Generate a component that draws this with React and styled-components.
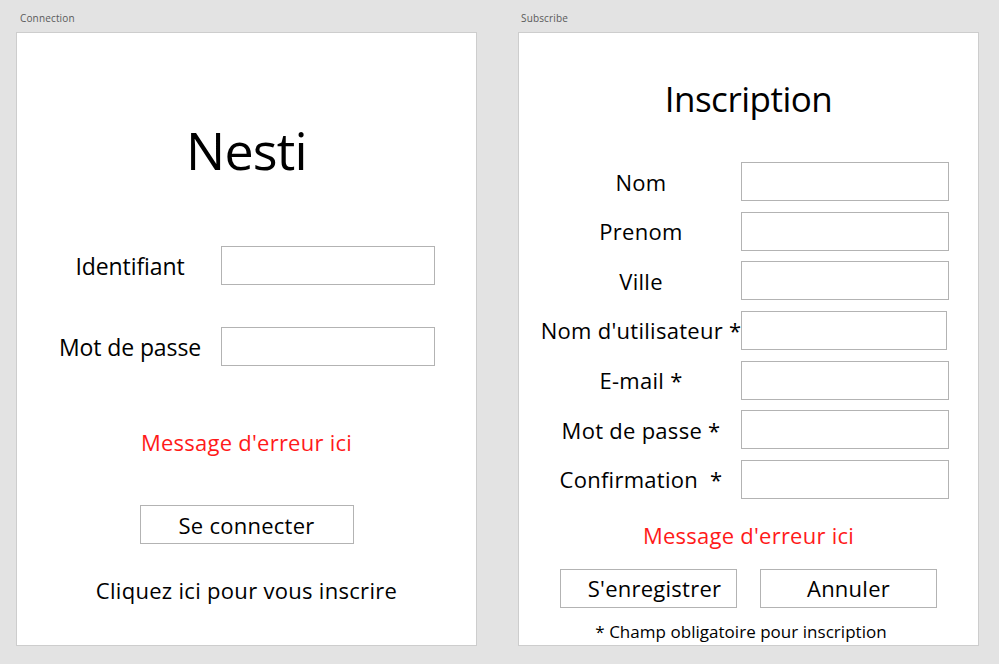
import React from "react";
import styled, { createGlobalStyle } from "styled-components";

const Global = createGlobalStyle`
  html, body { margin: 0; padding: 0; background: #e3e3e3; }
  body { font-family: "Open Sans", "Noto Sans", sans-serif; color: #000; }
  * { box-sizing: border-box; }
`;

const Page = styled.div`
  width: 999px;
  height: 664px;
  display: flex;
  gap: 41px;
  padding-left: 16px;
  background: #e3e3e3;
`;

const Column = styled.div`
  display: flex;
  flex-direction: column;
  width: 461px;
`;

const Caption = styled.div`
  font-size: 10px;
  line-height: 14px;
  letter-spacing: 0.15px;
  color: #5a5a5a;
  padding: 11px 0 7px ${(p) => p.$indent || 4}px;
`;

const Panel = styled.div`
  height: 614px;
  background: #fff;
  border: 1px solid #cdcdcd;
  display: flex;
  flex-direction: column;
  align-items: ${(p) => (p.$stretch ? "stretch" : "center")};
`;

const Title = styled.div`
  font-size: ${(p) => p.$size}px;
  line-height: ${(p) => p.$lh}px;
  margin-top: ${(p) => p.$mt}px;
  letter-spacing: ${(p) => p.$ls || 0}px;
  text-align: center;
  align-self: stretch;
`;

const LoginRow = styled.div`
  display: grid;
  grid-template-columns: 180px 214px;
  column-gap: 1px;
  align-items: center;
  align-self: flex-start;
  margin-left: 23px;
  margin-top: ${(p) => p.$mt}px;
`;

const Label = styled.div`
  display: flex;
  justify-content: center;
  white-space: nowrap;
  font-size: ${(p) => p.$size || 22}px;
  letter-spacing: ${(p) => (p.$size ? -0.1 : 0.28)}px;
  line-height: 30px;
`;

const Input = styled.div`
  height: 39px;
  width: ${(p) => p.$w || 214}px;
  border: 1px solid #b3b3b3;
  background: #fff;
`;

const ErrorText = styled.div`
  color: #ff1a1a;
  font-size: 22px;
  letter-spacing: 0.25px;
  line-height: 30px;
  text-align: center;
  align-self: stretch;
  margin-top: ${(p) => p.$mt}px;
`;

const Button = styled.div`
  width: ${(p) => p.$w}px;
  height: 39px;
  border: 1px solid #b3b3b3;
  background: #fff;
  display: flex;
  align-items: center;
  justify-content: center;
  font-size: 22px;
  letter-spacing: 0.25px;
  padding-left: ${(p) => p.$pl || 0}px;
  margin-top: ${(p) => p.$mt || 0}px;
`;

const LinkText = styled.div`
  font-size: 22px;
  letter-spacing: 0.3px;
  line-height: 30px;
  margin-top: ${(p) => p.$mt}px;
  text-align: center;
`;

const Form = styled.div`
  display: flex;
  flex-direction: column;
  gap: 10.67px;
  margin-top: 41px;
  padding-left: 22px;
`;

const SubRow = styled.div`
  display: grid;
  grid-template-columns: 200px 208px;
  align-items: center;
`;

const ButtonBar = styled.div`
  display: flex;
  justify-content: center;
  gap: 23px;
  margin-top: 19px;
`;

const Note = styled.div`
  font-size: 17px;
  letter-spacing: 0.03px;
  line-height: 22px;
  text-align: center;
  margin-top: 13px;
  padding-right: 15px;
`;

const fields = [
  { label: "Nom" },
  { label: "Prenom" },
  { label: "Ville" },
  { label: "Nom d'utilisateur *", w: 206 },
  { label: "E-mail *" },
  { label: "Mot de passe *" },
  { label: "Confirmation\u00a0\u00a0*" },
];

export default function App() {
  return (
    <>
      <Global />
      <Page>
        <Column>
          <Caption>Connection</Caption>
          <Panel>
            <Title $size={52} $lh={64} $mt={85} $ls={-0.8}>Nesti</Title>
            <LoginRow $mt={64}>
              <Label $size={23}>Identifiant</Label>
              <Input />
            </LoginRow>
            <LoginRow $mt={42}>
              <Label $size={23}>Mot de passe</Label>
              <Input />
            </LoginRow>
            <ErrorText $mt={61}>Message d'erreur ici</ErrorText>
            <Button $w={214} $mt={48}>Se connecter</Button>
            <LinkText $mt={31}>Cliquez ici pour vous inscrire</LinkText>
          </Panel>
        </Column>
        <Column>
          <Caption $indent={3}>Subscribe</Caption>
          <Panel $stretch>
            <Title $size={35} $lh={44} $mt={44} $ls={-0.5}>Inscription</Title>
            <Form>
              {fields.map((f) => (
                <SubRow key={f.label}>
                  <Label>{f.label}</Label>
                  <Input $w={f.w || 208} />
                </SubRow>
              ))}
            </Form>
            <ErrorText $mt={21}>Message d'erreur ici</ErrorText>
            <ButtonBar>
              <Button $w={177} $pl={12}>S'enregistrer</Button>
              <Button $w={177}>Annuler</Button>
            </ButtonBar>
            <Note>* Champ obligatoire pour inscription</Note>
          </Panel>
        </Column>
      </Page>
    </>
  );
}
